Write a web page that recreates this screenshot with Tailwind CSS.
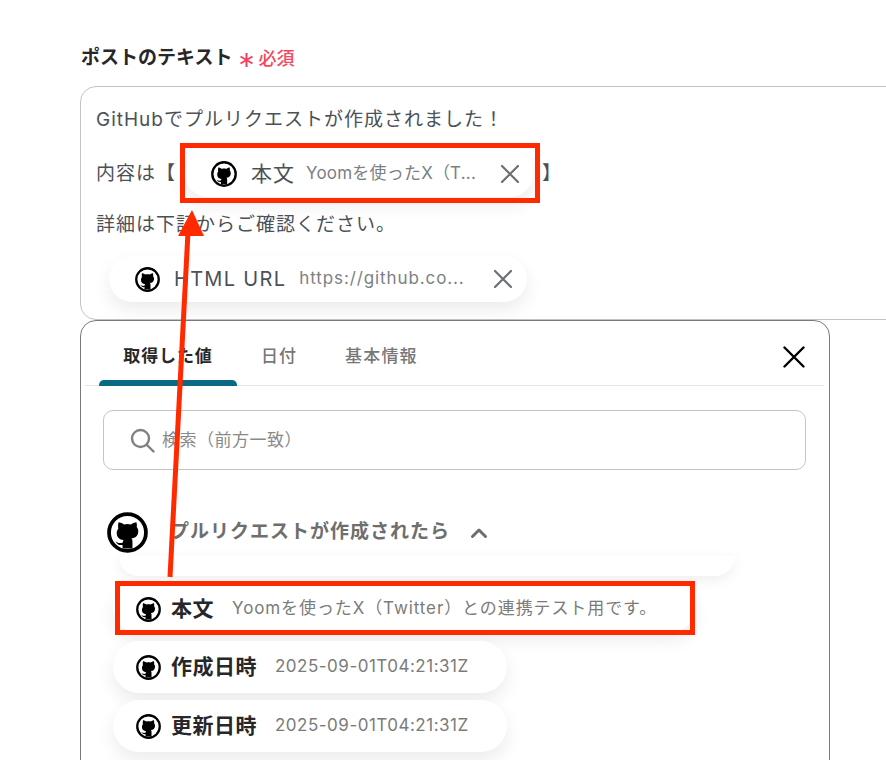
<!DOCTYPE html>
<html lang="ja">
<head>
    <meta charset="UTF-8">
    <title>ポストのテキスト</title>
    <script src="https://cdn.jsdelivr.net/npm/@tailwindcss/browser@4"></script>
</head>
<body class="bg-white">
<svg width="0" height="0" class="absolute">
    <symbol id="gh" viewBox="0 0 24 24">
        <circle cx="12" cy="12" r="10.8" fill="#fff" stroke="#000" stroke-width="2.2"/>
        <path fill="#000" d="M6.8 6c1 0 2.2.6 3.1 1.3.7-.2 1.4-.3 2.1-.3s1.400.1 2.100.3C15 6.600 16.200 6 17.200 6c.3.9.4 1.900.2 2.800.6.700.9 1.500.9 2.400 0 2.800-1.800 3.900-4 4.200.4.400.6 1 .6 1.700v4.300H9.100v-2.100c-1.900.3-3.200-.3-4.100-2.200.9.800 1.900 1.300 4.100.9.100-.6.300-1.100.6-1.500-2.400-.3-4-1.400-4-4.300 0-.9.300-1.700.9-2.400C6.400 7.900 6.500 6.900 6.800 6z"/>
    </symbol>
</svg>
<div class="relative w-[886px] h-[760px] overflow-hidden pt-[44px] font-['Inter','Noto_Sans_CJK_JP',sans-serif]">
    <!-- ラベル -->
    <div class="flex items-center pl-[81px] h-[28px]">
        <span class="mt-[1px] text-[19px] font-bold text-[#27272a]">ポストのテキスト</span>
        <svg class="ml-[8px] mt-[4px] w-[13px] h-[14px]" viewBox="0 0 13 14" stroke="#f43f5e" stroke-width="2"><path d="M6.500 0v14M.5 3.500l12 7M12.500 3.500l-12 7"/></svg>
        <span class="ml-[5px] mt-[1px] text-[18px] font-medium text-[#f4485f]">必須</span>
    </div>

    <!-- テキストエリア -->
    <div class="ml-[80px] mt-[14px] w-[830px] h-[234px] border border-[#c4c4c4] rounded-[16px] pl-[15px] pt-[18px] text-[19px] text-[#4b5157] tracking-[1px]">
        <p class="h-[30px] leading-[30px]">GitHubでプルリクエストが作成されました！</p>
        <div class="flex items-center h-[46px] mt-[16px]">
            <span>内容は【</span>
            <div class="ml-[9px] w-[348px] h-[46px] rounded-full bg-white shadow-[0_8px_18px_rgba(0,0,0,0.08)] flex items-center pl-[26px] pr-[13px]">
                <svg class="w-[26px] h-[26px] shrink-0"><use href="#gh"/></svg>
                <span class="ml-[14px] text-[#4b5157] text-[21px] tracking-[1px]">本文</span>
                <span class="ml-[11px] text-[17px] text-[#7b7f84] tracking-[0.200px] whitespace-nowrap">Yoomを使ったX（T...</span>
                <svg class="ml-auto w-[20px] h-[20px]" viewBox="0 0 20 20" stroke="#6b7075" stroke-width="2.200" stroke-linecap="round"><path d="M2 2l16 16M18 2L2 18"/></svg>
            </div>
            <span class="ml-[9px]">】</span>
        </div>
        <p class="h-[30px] leading-[30px] mt-[13px]">詳細は下記からご確認ください。</p>
        <div class="ml-[13px] mt-[16px] w-[418px] h-[46px] rounded-full bg-white shadow-[0_8px_18px_rgba(0,0,0,0.08)] flex items-center pl-[26px] pr-[14px]">
            <svg class="w-[25px] h-[25px] shrink-0"><use href="#gh"/></svg>
            <span class="ml-[14px] text-[#4b5157] text-[20px] tracking-[1.300px] whitespace-nowrap">HTML URL</span>
            <span class="ml-[13px] text-[17px] text-[#7b7f84] tracking-[0.900px] whitespace-nowrap">https://github.co...</span>
            <svg class="ml-auto w-[20px] h-[20px]" viewBox="0 0 20 20" stroke="#6b7075" stroke-width="2.200" stroke-linecap="round"><path d="M2 2l16 16M18 2L2 18"/></svg>
        </div>
    </div>

    <!-- 変数ピッカー -->
    <div class="relative ml-[80px] w-[750px] h-[600px] bg-white border border-[#7a7a7a] rounded-[16px]">
        <div class="relative flex h-[65px] ml-[4px] mr-[5px] border-b border-[#e5e5e5] pl-[14px]">
            <div class="w-[138px] h-[64px] pt-[21px] text-center text-[17px] leading-[28px] font-bold text-[#27272a] tracking-[0.900px] relative">
                取得した値
                <div class="absolute left-0 right-0 bottom-[-1px] h-[6px] bg-[#0a6a85] rounded-t-[5px]"></div>
            </div>
            <div class="ml-[24px] pt-[21px] text-[17px] leading-[28px] font-medium text-[#777] tracking-[1px]">日付</div>
            <div class="ml-[48px] pt-[21px] text-[17px] leading-[28px] font-medium text-[#777] tracking-[1.200px]">基本情報</div>
            <svg class="absolute right-[19px] top-[25px] w-[22px] h-[22px]" viewBox="0 0 22 22" stroke="#000" stroke-width="2.400" stroke-linecap="round"><path d="M1.500 1.500l19 19M20.500 1.500l-19 19"/></svg>
        </div>

        <div class="ml-[22px] mt-[24px] w-[703px] h-[60px] border border-[#c4c4c4] rounded-[10px] flex items-center pl-[26px]">
            <svg class="w-[25px] h-[25px]" viewBox="0 0 25 25" fill="none" stroke="#808080" stroke-width="2.400" stroke-linecap="round"><circle cx="10.500" cy="10.500" r="8.500"/><path d="M17 17l6.500 6.500"/></svg>
            <span class="ml-[7px] mt-[1px] text-[17px] text-[#8a8a8a] tracking-[0.500px]">検索（前方一致）</span>
        </div>

        <div class="flex items-center ml-[26px] mt-[41px] h-[42px]">
            <svg class="w-[41px] h-[41px] shrink-0"><use href="#gh"/></svg>
            <span class="ml-[22px] text-[19px] font-bold text-[#6e6e6e] tracking-[1px]">プルリクエストが作成されたら</span>
            <svg class="ml-[20px] w-[18px] h-[12px] mt-[2px]" viewBox="0 0 18 12" fill="none" stroke="#6e6e6e" stroke-width="3" stroke-linecap="round" stroke-linejoin="round"><path d="M2.500 9.500L9 3l6.500 6.500"/></svg>
        </div>
        <!-- 上の行の下端 -->
        <div class="ml-[38px] mt-[3px] w-[616px] h-[20px] bg-white rounded-b-[20px] shadow-[0_4px_14px_rgba(0,0,0,0.07)]"></div>

        <div class="ml-[32px] mt-[10px] flex flex-col items-start">
            <div class="w-[582px] h-[46px] rounded-full bg-white shadow-[0_8px_18px_rgba(0,0,0,0.08)] flex items-center pl-[23px]">
                <svg class="w-[25px] h-[25px] shrink-0"><use href="#gh"/></svg>
                <span class="ml-[10px] text-[21px] font-bold text-[#27272a] tracking-[0.500px]">本文</span>
                <span class="ml-[18px] text-[17px] text-[#7b7b7b] tracking-[0.900px] whitespace-nowrap">Yoomを使ったX（Twitter）との連携テスト用です。</span>
            </div>
            <div class="mt-[9px] w-[394px] h-[52px] rounded-full bg-white shadow-[0_8px_18px_rgba(0,0,0,0.08)] flex items-center pl-[23px]">
                <svg class="w-[25px] h-[25px] shrink-0"><use href="#gh"/></svg>
                <span class="ml-[10px] text-[21px] font-bold text-[#27272a] tracking-[0.500px] whitespace-nowrap">作成日時</span>
                <span class="ml-[18px] text-[17px] text-[#7b7b7b] tracking-[0.500px]">2025-09-01T04:21:31Z</span>
            </div>
            <div class="mt-[7px] w-[394px] h-[52px] rounded-full bg-white shadow-[0_8px_18px_rgba(0,0,0,0.08)] flex items-center pl-[23px]">
                <svg class="w-[25px] h-[25px] shrink-0"><use href="#gh"/></svg>
                <span class="ml-[10px] text-[21px] font-bold text-[#27272a] tracking-[0.500px] whitespace-nowrap">更新日時</span>
                <span class="ml-[18px] text-[17px] text-[#7b7b7b] tracking-[0.500px]">2025-09-01T04:21:31Z</span>
            </div>
        </div>
    </div>

    <!-- 注釈（赤枠と矢印） -->
    <div class="absolute left-[180px] top-[143px] w-[360px] h-[60px] border-[5px] border-[#ff2a00]"></div>
    <div class="absolute left-[115px] top-[581px] w-[580px] h-[54px] border-[5px] border-[#ff2a00]"></div>
    <svg class="absolute left-0 top-0 w-[886px] h-[760px] pointer-events-none" viewBox="0 0 886 760">
        <path d="M170 577L188 232" stroke="#ff2a00" stroke-width="5" fill="none"/>
        <path d="M192 210L204 236H178z" fill="#ff2a00"/>
    </svg>
</div>
</body>
</html>
